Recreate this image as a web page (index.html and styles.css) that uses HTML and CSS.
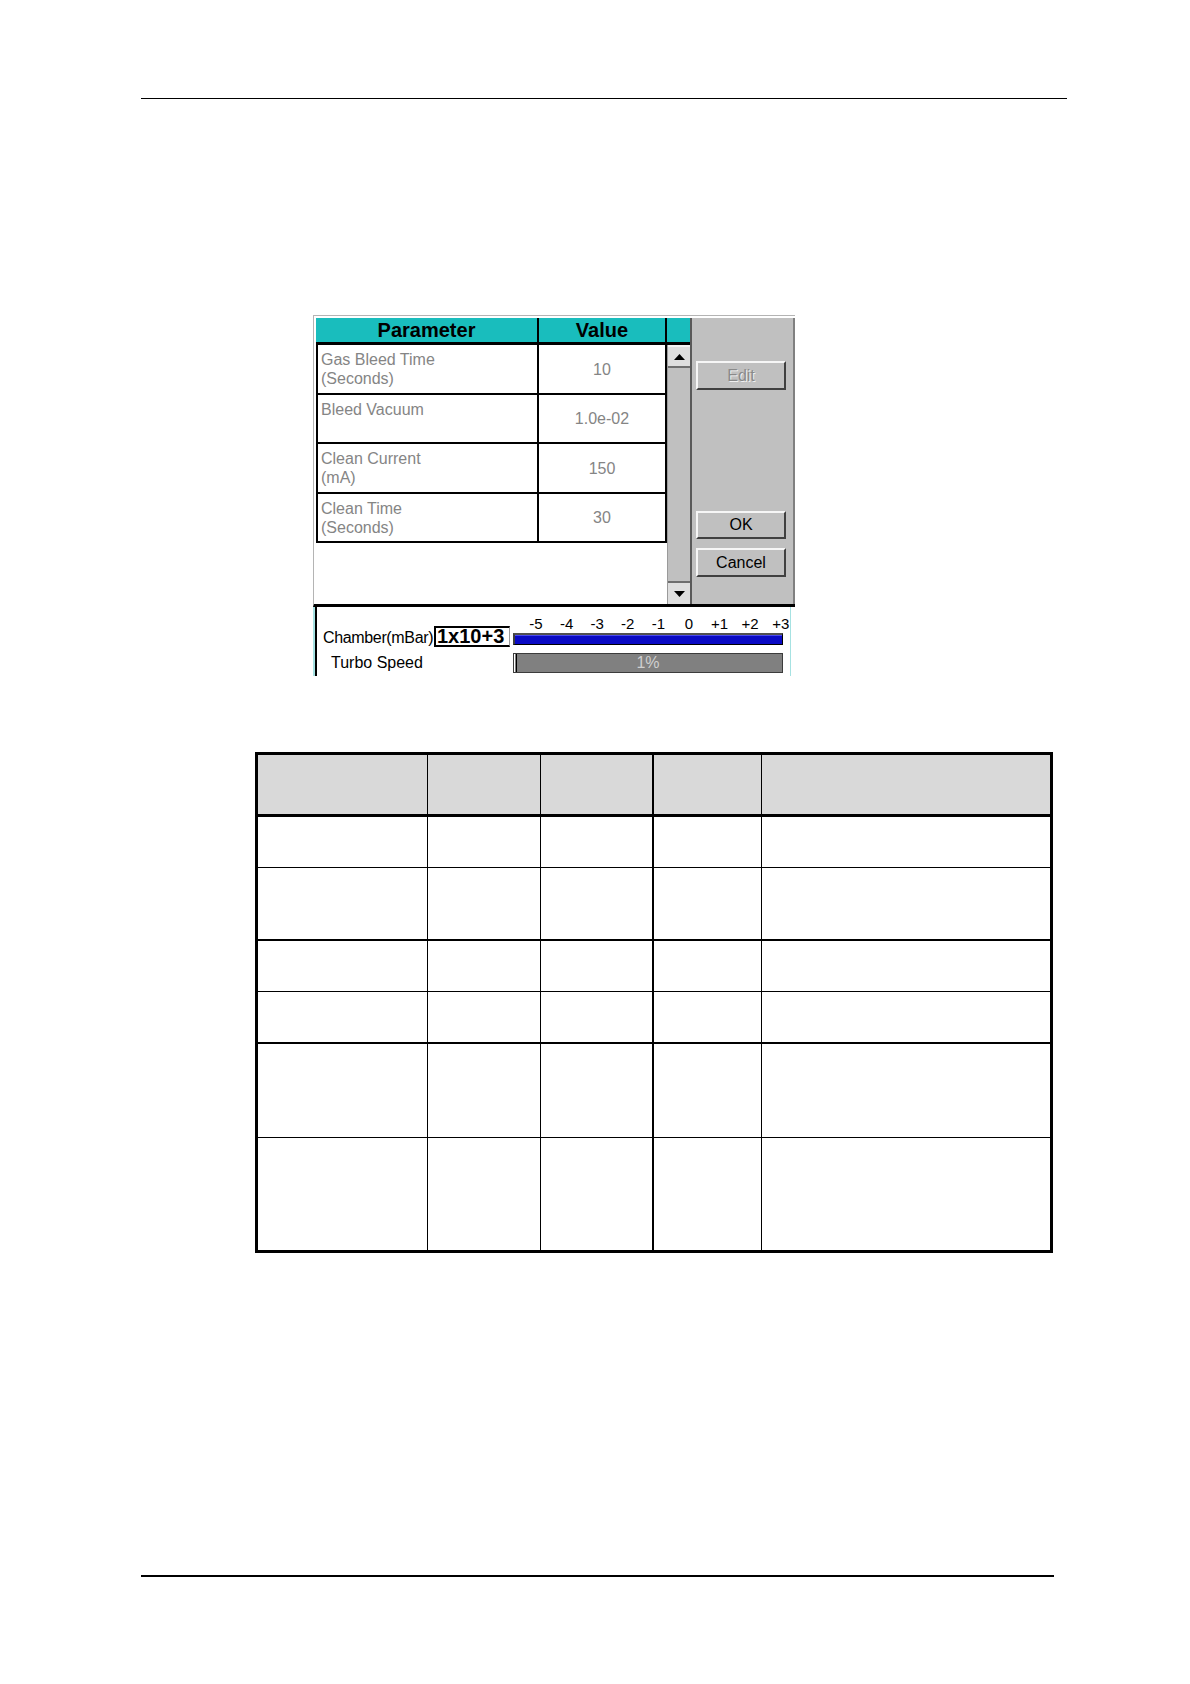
FILE: index.html
```html
<!DOCTYPE html>
<html lang="en">
<head>
<meta charset="utf-8">
<title>Gas Bleed Parameters</title>
<link rel="stylesheet" href="styles.css">
</head>
<body>
<div class="rule-top"></div>

<div class="dialog">
  <div class="dlg-main">
    <div class="grid">
      <div class="grid-head">
        <div class="gh-param">Parameter</div>
        <div class="gh-value">Value</div>
        <div class="gh-corner"></div>
      </div>
      <div class="grid-body">
        <div class="rows">
          <div class="row">
            <div class="cell-param">Gas Bleed Time<br>(Seconds)</div>
            <div class="cell-value">10</div>
          </div>
          <div class="row">
            <div class="cell-param">Bleed Vacuum</div>
            <div class="cell-value">1.0e-02</div>
          </div>
          <div class="row">
            <div class="cell-param">Clean Current<br>(mA)</div>
            <div class="cell-value">150</div>
          </div>
          <div class="row">
            <div class="cell-param">Clean Time<br>(Seconds)</div>
            <div class="cell-value">30</div>
          </div>
        </div>
        <div class="scrollbar">
          <div class="sb-btn sb-up"><svg width="11" height="6" viewBox="0 0 11 6"><polygon points="0,6 11,6 5.5,0" fill="#000"/></svg></div>
          <div class="sb-track"></div>
          <div class="sb-btn sb-down"><svg width="11" height="6" viewBox="0 0 11 6"><polygon points="0,0 11,0 5.5,6" fill="#000"/></svg></div>
        </div>
      </div>
    </div>
    <div class="side">
      <div class="btn btn-disabled btn-edit">Edit</div>
      <div class="btn btn-ok">OK</div>
      <div class="btn btn-cancel">Cancel</div>
    </div>
  </div>
  <div class="dlg-status">
    <div class="status-inner">
      <div class="st-chamber">
        <span class="st-label">Chamber(mBar)</span>
        <span class="st-box">1x10+3</span>
      </div>
      <div class="st-gauge">
        <div class="scale">
          <span>-5</span><span>-4</span><span>-3</span><span>-2</span><span>-1</span><span>0</span><span>+1</span><span>+2</span><span>+3</span>
        </div>
        <div class="bar-blue"></div>
      </div>
      <div class="st-turbo">Turbo Speed</div>
      <div class="st-turbo-bar">
        <div class="bar-gray"><span class="bar-tick"></span><span class="bar-text">1%</span></div>
      </div>
    </div>
  </div>
</div>

<table class="spec">
  <thead>
    <tr class="r-head">
      <th class="c1"></th><th class="c2"></th><th class="c3"></th><th class="c4"></th><th class="c5"></th>
    </tr>
  </thead>
  <tbody>
    <tr class="r1"><td></td><td></td><td class="c3"></td><td></td><td class="c5"></td></tr>
    <tr class="r2 thick"><td></td><td></td><td class="c3"></td><td></td><td class="c5"></td></tr>
    <tr class="r3"><td></td><td></td><td class="c3"></td><td></td><td class="c5"></td></tr>
    <tr class="r4 thick"><td></td><td></td><td class="c3"></td><td></td><td class="c5"></td></tr>
    <tr class="r5"><td></td><td></td><td class="c3"></td><td></td><td class="c5"></td></tr>
    <tr class="r6 last"><td></td><td></td><td class="c3"></td><td></td><td class="c5"></td></tr>
  </tbody>
</table>

<div class="rule-bottom"></div>
</body>
</html>
```

FILE: styles.css
```css
html, body {
  margin: 0;
  padding: 0;
  background: #ffffff;
}

body {
  font-family: "Liberation Sans", Arial, sans-serif;
  color: #000;
}

.rule-top {
  margin: 98px 0 0 141px;
  width: 926px;
  height: 0;
  border-top: 1px solid #000;
}

/* ---------- dialog ---------- */
.dialog {
  margin: 216px 0 0 313px;
  width: 482px;
}

.dlg-main {
  display: flex;
  height: 292px;
  box-sizing: border-box;
  background: #fff;
  border-top: 1px solid #b4b4b4;
  border-left: 1px solid #b4b4b4;
  border-bottom: 3px solid #000;
  padding: 2px 0 0 2px;
}

.grid {
  width: 374px;
  display: flex;
  flex-direction: column;
}

.grid-head {
  display: flex;
  height: 27px;
  box-sizing: border-box;
  border-bottom: 3px solid #000;
  background: #19bdbd;
  font-weight: bold;
  font-size: 20px;
  line-height: 24px;
}

.gh-param {
  width: 221px;
  border-right: 2px solid #000;
  text-align: center;
}

.gh-value {
  width: 126px;
  border-right: 2px solid #000;
  text-align: center;
}

.gh-corner {
  width: 23px;
}

.grid-body {
  display: flex;
  flex: 1;
}

.rows {
  width: 351px;
}

.row {
  display: flex;
  height: 49.5px;
  box-sizing: border-box;
  border-left: 2px solid #000;
  border-bottom: 2px solid #000;
  color: #858585;
  font-size: 16px;
}

.cell-param {
  width: 221px;
  border-right: 2px solid #000;
  box-sizing: border-box;
  padding: 5px 3px 0 3px;
  line-height: 19px;
}

.cell-value {
  width: 128px;
  box-sizing: border-box;
  border-right: 2px solid #000;
  display: flex;
  align-items: center;
  justify-content: center;
  padding-top: 2px;
}

.scrollbar {
  width: 23px;
  display: flex;
  flex-direction: column;
  background: #c0c0c0;
  border-left: 1px solid #9a9a9a;
  box-sizing: border-box;
}

.sb-btn {
  height: 23px;
  box-sizing: border-box;
  background: #dedede;
  display: flex;
  align-items: center;
  justify-content: center;
}

.sb-up {
  border-top: 2px solid #f4f4f4;
  border-bottom: 2px solid #6e6e6e;
}

.sb-down {
  border-top: 2px solid #6e6e6e;
}

.sb-track {
  flex: 1;
  background: #c0c0c0;
}

.side {
  flex: 1;
  background: #c0c0c0;
  border-left: 2px solid #5a5a5a;
  border-right: 2px solid #808080;
  padding: 43px 0 0 4px;
  display: flex;
  flex-direction: column;
}

.btn {
  width: 90px;
  height: 29px;
  box-sizing: border-box;
  border: 2px solid;
  border-color: #f6f6f6 #404040 #404040 #f6f6f6;
  background: #c0c0c0;
  font-size: 16px;
  display: flex;
  align-items: center;
  justify-content: center;
  color: #000;
}

.btn-disabled {
  color: #8a8a8a;
  text-shadow: 1px 1px 0 #f0f0f0;
}

.btn-ok {
  margin-top: 121px;
  height: 28px;
}

.btn-cancel {
  margin-top: 9px;
}

/* status panel */
.dlg-status {
  width: 478px;
  height: 69px;
  box-sizing: border-box;
  border-left: 2px solid #a6e2e2;
  border-right: 1px solid #a6e2e2;
  background: #fff;
}

.status-inner {
  height: 100%;
  border-left: 2px solid #000;
  display: grid;
  grid-template-columns: 196px 270px;
  grid-template-rows: 44px 25px;
  font-size: 16px;
}

.st-chamber {
  display: flex;
  align-items: flex-end;
  padding: 0 0 4px 6px;
}

.st-label {
  width: 111px;
  line-height: 18px;
  letter-spacing: -0.35px;
}

.st-box {
  width: 76px;
  height: 21px;
  box-sizing: border-box;
  border-top: 2px solid #000;
  border-left: 2px solid #000;
  border-bottom: 2px solid #000;
  border-right: 1px solid #9a9a9a;
  font-weight: bold;
  font-size: 20px;
  line-height: 17px;
  padding-left: 1px;
  white-space: nowrap;
  overflow: hidden;
}

.st-gauge {
  padding-top: 10px;
}

.scale {
  display: flex;
  height: 16px;
  padding-left: 7.7px;
  font-size: 15px;
  line-height: 14px;
  white-space: nowrap;
}

.scale span {
  width: 30.6px;
  flex: none;
  text-align: center;
}

.bar-blue {
  height: 12px;
  box-sizing: border-box;
  border-top: 2px solid #505050;
  border-left: 2px solid #404040;
  border-bottom: 1px solid #000;
  border-right: 1px solid #000;
  background: #0a0ac4;
  box-shadow: inset 0 1px 0 #4a4af0;
}

.st-turbo {
  padding: 2px 0 0 14px;
  line-height: 20px;
}

.st-turbo-bar {
  padding-top: 2px;
}

.bar-gray {
  height: 20px;
  box-sizing: border-box;
  border: 1px solid #3c3c3c;
  background: #808080;
  display: flex;
  align-items: center;
}

.bar-tick {
  width: 3px;
  height: 100%;
  border-left: 1px solid #fff;
  border-right: 1px solid #000;
  box-sizing: border-box;
  flex: none;
}

.bar-text {
  flex: 1;
  text-align: center;
  color: #cfcfcf;
  font-size: 16px;
  line-height: 18px;
  padding-right: 3px;
}

/* ---------- spec table ---------- */
.spec {
  margin: 76px 0 0 255px;
  border-collapse: separate;
  border-spacing: 0;
  table-layout: fixed;
  width: 798px;
  border: 3px solid #000;
}

.spec th,
.spec td {
  box-sizing: border-box;
  padding: 0;
  border-right: 1px solid #000;
  border-bottom: 1px solid #000;
}

.spec th {
  background: #d9d9d9;
  border-bottom: 3px solid #000;
}

.spec .c1 { width: 170px; }
.spec .c2 { width: 113px; }
.spec .c3 { width: 113px; border-right-width: 2px; }
.spec .c4 { width: 108px; }
.spec .c5 { width: 288px; border-right: none; }

.spec tr.thick td {
  border-bottom-width: 2px;
}

.spec tr.last td {
  border-bottom: none;
}

.r-head { height: 62px; }
.r1 { height: 51px; }
.r2 { height: 73px; }
.r3 { height: 51px; }
.r4 { height: 52px; }
.r5 { height: 94px; }
.r6 { height: 112px; }

.rule-bottom {
  margin: 322px 0 0 141px;
  width: 913px;
  height: 0;
  border-top: 2px solid #000;
}
```
